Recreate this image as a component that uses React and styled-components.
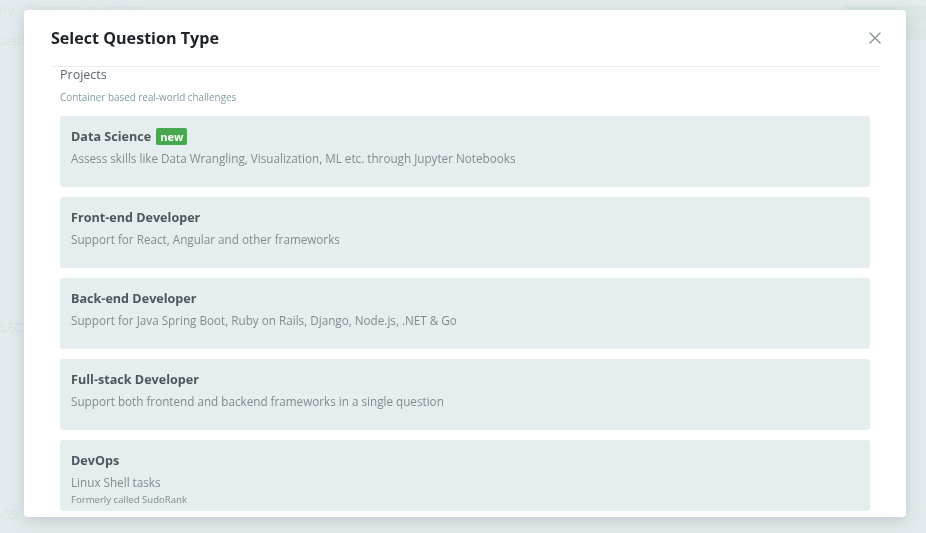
import React from 'react';
import styled, { createGlobalStyle } from 'styled-components';

const GlobalStyle = createGlobalStyle`
  html, body {
    margin: 0;
    padding: 0;
    height: 100%;
    overflow: hidden;
  }
  body {
    font-family: 'Open Sans', 'Liberation Sans', sans-serif;
    background: #f4f7f8;
  }
`;

const Page = styled.div`
  width: 926px;
  height: 533px;
  display: flex;
  flex-direction: column;
  background: #f7f9fa;
`;

const TopBar = styled.div`
  display: flex;
  align-items: flex-start;
  justify-content: space-between;
  height: 44px;
`;

const Breadcrumb = styled.div`
  margin-left: -28px;
  font-size: 13px;
  color: #b7c2c6;
`;

const GhostButton = styled.div`
  margin-top: 6px;
  width: 110px;
  height: 34px;
  background: #b8e0c4;
  border-radius: 4px;
  color: #fff;
  font-size: 13px;
  display: flex;
  align-items: center;
  padding-left: 56px;
  box-sizing: border-box;
  margin-right: -26px;
`;

const SideLabel = styled.div`
  font-size: 12px;
  color: #aab6ba;
  margin: ${(p) => p.$m};
`;

const Overlay = styled.div`
  position: fixed;
  inset: 0;
  background: rgba(225, 232, 234, 0.86);
`;

const Modal = styled.div`
  position: fixed;
  left: 24px;
  top: 10px;
  width: 882px;
  height: 507px;
  background: #fff;
  border-radius: 4px;
  box-shadow: 0 4px 16px rgba(60, 80, 90, 0.22);
  display: flex;
  flex-direction: column;
  overflow: hidden;
`;

const Header = styled.div`
  margin: 0 27px;
  height: 56px;
  border-bottom: 1px solid #e8ecee;
  display: flex;
  align-items: center;
  justify-content: space-between;
`;

const Title = styled.h2`
  margin: 0;
  font-size: 16.1px;
  font-weight: 700;
  color: #1d2329;
`;

const Close = styled.button`
  border: 0;
  background: none;
  padding: 0;
  margin-right: -3px;
  width: 14px;
  height: 14px;
  display: flex;
  align-items: center;
  justify-content: center;
  cursor: pointer;
`;

const Body = styled.div`
  flex: 1;
  overflow: hidden;
  padding: 0 36px;
`;

const GroupTitle = styled.div`
  font-size: 12.5px;
  line-height: 16px;
  color: #5b666d;
`;

const GroupHint = styled.div`
  margin-top: 8px;
  font-size: 9.9px;
  line-height: 12px;
  color: #7f9aa2;
`;

const List = styled.div`
  margin-top: 13px;
  display: flex;
  flex-direction: column;
  gap: 10px;
`;

const Card = styled.div`
  height: 71px;
  box-sizing: border-box;
  padding: 11px 11px 0;
  background: #e6edee;
  border-radius: 3px;
  cursor: pointer;
`;

const CardTitle = styled.div`
  display: flex;
  align-items: center;
  gap: 5px;
  height: 18px;
  font-size: 12.6px;
  font-weight: 700;
  color: #4a575f;
`;

const Badge = styled.span`
  background: #48a84f;
  color: #fff;
  font-size: 11px;
  font-weight: 700;
  line-height: 17px;
  padding: 0 4px;
  border-radius: 2px;
`;

const CardDesc = styled.div`
  margin-top: 5px;
  font-size: 11.7px;
  line-height: 16px;
  color: #7f8c92;
`;

const CardNote = styled.div`
  margin-top: 3px;
  font-size: 9.6px;
  line-height: 13px;
  color: #7f8c92;
`;

const types = [
  {
    title: 'Data Science',
    badge: 'new',
    desc: 'Assess skills like Data Wrangling, Visualization, ML etc. through Jupyter Notebooks',
  },
  { title: 'Front-end Developer', desc: 'Support for React, Angular and other frameworks' },
  {
    title: 'Back-end Developer',
    desc: 'Support for Java Spring Boot, Ruby on Rails, Django, Node.js, .NET & Go',
  },
  {
    title: 'Full-stack Developer',
    desc: 'Support both frontend and backend frameworks in a single question',
  },
  { title: 'DevOps', desc: 'Linux Shell tasks', note: 'Formerly called SudoRank' },
];

const App = () => (
  <>
    <GlobalStyle />
    <Page>
      <TopBar>
        <Breadcrumb>Library - Company questions</Breadcrumb>
        <GhostButton>Create</GhostButton>
      </TopBar>
      <SideLabel $m="-12px 0 0 -12px">Questions</SideLabel>
      <SideLabel $m="270px 0 0 -12px">SELECTED TYPES</SideLabel>
      <SideLabel $m="170px 0 0 -12px">TAGS</SideLabel>
    </Page>
    <Overlay />
    <Modal>
      <Header>
        <Title>Select Question Type</Title>
        <Close aria-label="Close">
          <svg width="12" height="12" viewBox="0 0 12 12">
            <path d="M1 1L11 11M11 1L1 11" stroke="#8b959b" strokeWidth="1.4" strokeLinecap="round" />
          </svg>
        </Close>
      </Header>
      <Body>
        <GroupTitle>Projects</GroupTitle>
        <GroupHint>Container based real-world challenges</GroupHint>
        <List>
          {types.map((t) => (
            <Card key={t.title}>
              <CardTitle>
                {t.title}
                {t.badge && <Badge>{t.badge}</Badge>}
              </CardTitle>
              <CardDesc>{t.desc}</CardDesc>
              {t.note && <CardNote>{t.note}</CardNote>}
            </Card>
          ))}
        </List>
      </Body>
    </Modal>
  </>
);

export default App;
